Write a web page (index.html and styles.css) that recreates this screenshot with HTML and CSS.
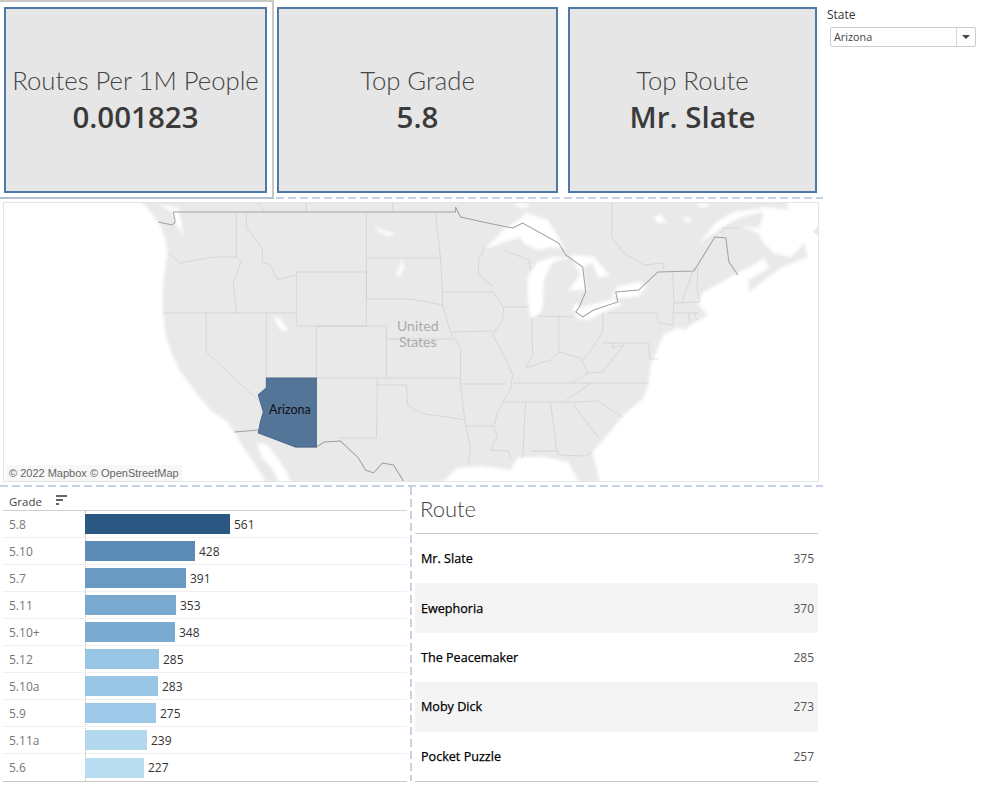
FILE: index.html
```html
<!DOCTYPE html>
<html lang="en">
<head>
    <meta charset="UTF-8">
    <title>Climbing Routes Dashboard</title>
    <link rel="stylesheet" href="styles.css">
</head>
<body>
    <div class="dashboard">
        <div class="main">
            <div class="kpi-row">
                <div class="kpi-slot kpi-slot-selected">
                    <div class="kpi-card kpi-first">
                        <div class="kpi-title">Routes Per 1M People</div>
                        <div class="kpi-value">0.001823</div>
                    </div>
                </div>
                <div class="kpi-card kpi-second">
                    <div class="kpi-title">Top Grade</div>
                    <div class="kpi-value">5.8</div>
                </div>
                <div class="kpi-card kpi-third">
                    <div class="kpi-title">Top Route</div>
                    <div class="kpi-value">Mr. Slate</div>
                </div>
            </div>
            <div class="dash-line"></div>

            <div class="map-frame">
                <svg class="map" viewBox="4 203 813 278" preserveAspectRatio="none">
                    <defs>
                        <filter id="soften" x="-5%" y="-5%" width="110%" height="110%">
                            <feGaussianBlur stdDeviation="1.1"/>
                        </filter>
                    </defs>
                    <rect class="land" x="4" y="203" width="813" height="278"/>
                    <!-- ocean and lakes are drawn white over the land -->
                    <g class="waters" filter="url(#soften)">
                        <polygon points="0,199 138,199 150,212 160,225 165,240 167,255 163,280 162,302 165,335 172,355 180,372 190,385 197,395 210,410 227,422 236,435 243,448 255,465 267,485 0,485"/>
                        <polygon points="257,443 267,445 277,458 285,470 292,485 280,485 272,468 262,458"/>
                        <polygon points="440,485 457,468 480,466 510,470 517,458 543,457 567,462 580,485"/>
                        <polygon points="787,199 821,199 821,485 600,485 592,452 607,435 623,415 643,398 648,383 650,365 663,335 677,328 683,330 707,315 697,303 702,293 737,273 753,265 763,258 768,268 747,280 748,292 760,283 780,268 807,257 803,243 790,257 773,253 763,243 757,233 743,227 758,228 763,215 760,212 738,218 720,228 700,242 715,223 733,212 757,209 763,207 787,210"/>
                        <!-- great lakes -->
                        <polygon points="487,247 503,230 522,217 525,213 547,220 560,242 563,248 550,247 537,250 523,243 520,237 503,242 490,247"/>
                        <polygon points="527,277 537,262 553,257 567,258 552,262 543,280 542,307 538,315 530,317 527,297"/>
                        <polygon points="570,255 593,257 608,275 598,278 592,263 582,267 585,290 568,290 580,275 572,260"/>
                        <polygon points="572,309 578,319 587,320 604,311 620,305 613,299 595,304 580,308 576,303"/>
                        <polygon points="611,296 617,287 638,282 646,286 638,296 620,298"/>
                        <polygon points="515,203 527,204 527,207 518,207"/>
                        <!-- smaller lakes and inlets -->
                        <polygon points="160,205 178,208 183,233 176,225 172,212"/>
                        <polygon points="375,227 383,231 393,233 388,236 379,232"/>
                        <polygon points="401,258 403,268 399,276 396,274 400,267"/>
                        <polygon points="275,317 280,319 287,330 282,331 277,325"/>
                        <polygon points="653,217 660,215 665,222 657,223"/>
                        <polygon points="683,217 689,218 688,222 684,221"/>
                        <polygon points="697,204 707,204 706,207 699,207"/>
                    </g>
                    <polygon class="land" points="817,226 812,232 817,236"/>

                    <!-- Canada / Mexico borders -->
                    <polyline class="border" points="173,212 455,212 455,207 460,217 487,223 512,228 522,223 558,243 565,255 582,267 585,292 578,308 575,312 582,317 593,310 617,302 615,292 638,290 657,272 693,271 703,255 714,237 725,238 728,262 737,275"/>
                    <polyline class="border" points="173,212 175,222 172,225 158,222"/>
                    <polyline class="border" points="234,432 258,430"/>
                    <polyline class="border" points="295,447 316,447 324,442 340,441 358,458 365,470 373,473 382,463 393,465 403,481"/>

                    <!-- western states -->
                    <polyline class="state" points="168,253 180,263 213,257 237,257"/>
                    <polyline class="state" points="236,212 236,257 241,262 233,282 236,313"/>
                    <polyline class="state" points="163,313 296,313"/>
                    <polyline class="state" points="246,212 246,228 262,248 262,262 270,265 277,280 295,275"/>
                    <polyline class="state" points="296,272 366,272 366,326 296,326 296,272"/>
                    <polyline class="state" points="366,212 366,299"/>
                    <polyline class="state" points="366,258 440,258"/>
                    <polyline class="state" points="366,299 410,299 427,302 442,305"/>
                    <polyline class="state" points="206,313 206,352 260,402"/>
                    <polyline class="state" points="266,313 266,378"/>
                    <polyline class="state" points="316,326 316,378"/>
                    <polyline class="state" points="316,326 386,326 386,378"/>
                    <polyline class="state" points="386,339 453,339"/>
                    <polyline class="state" points="316,378 460,378"/>
                    <polyline class="state" points="377,378 376,438 340,438"/>
                    <polyline class="state" points="376,385 406,385 407,405 420,413 430,415 447,417 465,420"/>
                    <polyline class="state" points="258,203 265,212"/>
                    <polyline class="state" points="306,203 306,212"/>
                    <polyline class="state" points="392,203 392,212"/>

                    <!-- plains and midwest -->
                    <polyline class="state" points="435,213 440,258 442,292 442,305 450,332 460,348 460,384 465,426 470,448 468,465"/>
                    <polyline class="state" points="442,292 493,292"/>
                    <polyline class="state" points="450,332 492,331"/>
                    <polyline class="state" points="460,384 505,384"/>
                    <polyline class="state" points="465,426 493,426"/>
                    <polyline class="state" points="493,292 503,308 502,320 492,335 503,355 512,375 510,388 497,412 493,428 497,435 490,450 508,451 510,458"/>
                    <polyline class="state" points="484,247 478,260 478,275 493,287"/>
                    <polyline class="state" points="503,250 528,260 530,270"/>
                    <polyline class="state" points="502,307 528,307"/>
                    <polyline class="state" points="531,317 532,355 525,368"/>
                    <polyline class="state" points="537,316 573,317"/>
                    <polyline class="state" points="558,317 558,352"/>
                    <polyline class="state" points="602,313 602,332 592,348 582,360"/>
                    <polyline class="state" points="525,368 550,360 558,352 580,358 587,373 573,382"/>
                    <polyline class="state" points="587,373 602,372 623,345 612,348 612,343"/>
                    <polyline class="state" points="608,313 655,313 658,323 672,325"/>
                    <polyline class="state" points="602,343 648,343 649,359 657,359"/>
                    <polyline class="state" points="672,272 673,303 672,325"/>
                    <polyline class="state" points="693,268 681,303"/>
                    <polyline class="state" points="697,268 696,288 699,302"/>
                    <polyline class="state" points="673,303 699,302"/>
                    <polyline class="state" points="672,313 698,313"/>
                    <polyline class="state" points="688,313 688,322"/>
                    <polyline class="state" points="693,313 696,320"/>
                    <polyline class="state" points="513,383 648,383"/>
                    <polyline class="state" points="505,402 573,402"/>
                    <polyline class="state" points="563,402 590,383"/>
                    <polyline class="state" points="573,402 597,401 622,417"/>
                    <polyline class="state" points="573,405 598,438"/>
                    <polyline class="state" points="525,402 522,458"/>
                    <polyline class="state" points="550,402 556,452"/>
                    <polyline class="state" points="530,451 557,451 558,455 585,456 592,452"/>
                    <polyline class="state" points="611,203 611,237 623,253 643,265 662,263 662,270"/>
                    <polyline class="state" points="720,233 723,228 738,228"/>

                    <!-- selected state -->
                    <polygon class="selected-state" points="266,378 316,378 316,447 295,447 258,433 260,422 263,412 258,395 266,388"/>
                </svg>
                <div class="map-label map-label-us">United<br>States</div>
                <div class="map-label map-label-az">Arizona</div>
                <div class="map-credit">© 2022 Mapbox © OpenStreetMap</div>
            </div>
            <div class="dash-line dash-line-lower"></div>

            <div class="bottom-row">
                <div class="grade-chart">
                    <div class="grade-header">
                        <span>Grade</span>
                        <svg class="sort-icon" width="11" height="10" viewBox="0 0 11 10">
                            <rect x="0" y="0" width="11" height="2"/>
                            <rect x="0" y="4" width="7" height="2"/>
                            <rect x="0" y="8" width="3" height="2"/>
                        </svg>
                    </div>
                    <div class="grade-rows">
                        <div class="grade-row"><span class="grade-name">5.8</span><div class="bar" style="width:145px;background:#2b5783"></div><span class="bar-value">561</span></div>
                        <div class="grade-row"><span class="grade-name">5.10</span><div class="bar" style="width:110px;background:#5b8ab5"></div><span class="bar-value">428</span></div>
                        <div class="grade-row"><span class="grade-name">5.7</span><div class="bar" style="width:101px;background:#6a9ac2"></div><span class="bar-value">391</span></div>
                        <div class="grade-row"><span class="grade-name">5.11</span><div class="bar" style="width:91px;background:#7aa9d0"></div><span class="bar-value">353</span></div>
                        <div class="grade-row"><span class="grade-name">5.10+</span><div class="bar" style="width:90px;background:#7aa9d0"></div><span class="bar-value">348</span></div>
                        <div class="grade-row"><span class="grade-name">5.12</span><div class="bar" style="width:74px;background:#9ac6e6"></div><span class="bar-value">285</span></div>
                        <div class="grade-row"><span class="grade-name">5.10a</span><div class="bar" style="width:73px;background:#9ac6e6"></div><span class="bar-value">283</span></div>
                        <div class="grade-row"><span class="grade-name">5.9</span><div class="bar" style="width:71px;background:#9ec8e8"></div><span class="bar-value">275</span></div>
                        <div class="grade-row"><span class="grade-name">5.11a</span><div class="bar" style="width:62px;background:#b3d8ee"></div><span class="bar-value">239</span></div>
                        <div class="grade-row"><span class="grade-name">5.6</span><div class="bar" style="width:59px;background:#badcf0"></div><span class="bar-value">227</span></div>
                    </div>
                </div>
                <div class="dash-line-v"></div>
                <div class="route-list">
                    <div class="route-title">Route</div>
                    <div class="route-rows">
                        <div class="route-row"><span class="route-name">Mr. Slate</span><span class="route-count">375</span></div>
                        <div class="route-row route-row-alt"><span class="route-name">Ewephoria</span><span class="route-count">370</span></div>
                        <div class="route-row"><span class="route-name">The Peacemaker</span><span class="route-count">285</span></div>
                        <div class="route-row route-row-alt"><span class="route-name">Moby Dick</span><span class="route-count">273</span></div>
                        <div class="route-row"><span class="route-name">Pocket Puzzle</span><span class="route-count">257</span></div>
                    </div>
                </div>
            </div>
        </div>

        <div class="filter">
            <div class="filter-label">State</div>
            <div class="filter-select">
                <span class="filter-text">Arizona</span>
                <span class="filter-button"><span class="filter-arrow"></span></span>
            </div>
        </div>
    </div>
</body>
</html>
```

FILE: styles.css
```css
body {
    margin: 0;
    background-color: #fff;
    font-family: "Open Sans", sans-serif;
    color: #333;
}

.dashboard {
    display: flex;
    width: 990px;
    height: 793px;
    overflow: hidden;
}

.main {
    width: 823px;
    flex-shrink: 0;
}

/* KPI cards */
.kpi-row {
    display: flex;
    height: 197px;
    align-items: flex-start;
}

.kpi-slot-selected {
    box-sizing: border-box;
    width: 274px;
    height: 199px;
    padding: 5px 0 0 4px;
    border-top: 2px solid #c8c8c8;
    border-right: 2px solid #c8c8c8;
    border-bottom: 2px solid #b4bfd0;
}

.kpi-card {
    box-sizing: border-box;
    height: 186px;
    margin-top: 7px;
    border: 2px solid #4f79a7;
    background-color: #e6e6e6;
    display: flex;
    flex-direction: column;
    align-items: center;
    justify-content: center;
    text-align: center;
}

.kpi-first {
    width: 263px;
    margin-top: 0;
}

.kpi-second {
    width: 281px;
    margin-left: 3px;
}

.kpi-third {
    width: 249px;
    margin-left: 10px;
}

.kpi-title {
    font-family: Lato, sans-serif;
    font-weight: 300;
    font-size: 25.7px;
    line-height: 34px;
    color: #444;
}

.kpi-value {
    font-family: "Open Sans", sans-serif;
    font-weight: 600;
    font-size: 29.5px;
    line-height: 40px;
    color: #3a3a3a;
}

/* dashed splitters */
.dash-line,
.dash-line-v {
    background-image: repeating-linear-gradient(90deg, #c5d2e6 0, #c5d2e6 8px, transparent 8px, transparent 12px);
}

.dash-line {
    height: 2px;
}

.dash-line-v {
    width: 2px;
    height: 294px;
    flex-shrink: 0;
    background-image: repeating-linear-gradient(180deg, #c5d2e6 0, #c5d2e6 8px, transparent 8px, transparent 12px);
}

.dash-line-lower {
    margin-top: 3px;
}

/* map */
.map-frame {
    position: relative;
    box-sizing: border-box;
    width: 816px;
    height: 280px;
    margin: 3px 0 0 3px;
    border: 1px solid #e4e4e4;
}

.map {
    display: block;
    width: 100%;
    height: 100%;
}

.land {
    fill: #e9e9e9;
}

.waters {
    fill: #fff;
    stroke: #f6f6f6;
    stroke-width: 2;
}

.border {
    fill: none;
    stroke: #a0a0a0;
    stroke-width: 1;
}

.state {
    fill: none;
    stroke: #cfcfcf;
    stroke-width: 0.7;
}

.selected-state {
    fill: #537598;
    stroke: #4a6a8c;
    stroke-width: 1;
}

.map-label {
    position: absolute;
    font-family: Lato, sans-serif;
}

.map-label-us {
    left: 393px;
    top: 115px;
    font-size: 14px;
    line-height: 16px;
    text-align: center;
    color: #a9a9a9;
}

.map-label-az {
    left: 265px;
    top: 199px;
    font-size: 12.5px;
    line-height: 16px;
    color: #111;
}

.map-credit {
    position: absolute;
    left: 2px;
    bottom: 0;
    padding: 1px 3px;
    font-family: "Liberation Sans", Arial, sans-serif;
    font-size: 11px;
    line-height: 14px;
    color: #666;
    background-color: #f7f7f7;
}

/* bottom row */
.bottom-row {
    display: flex;
    height: 294px;
}

.grade-chart {
    width: 404px;
    margin-left: 3px;
    margin-right: 3px;
    flex-shrink: 0;
}

.grade-header {
    box-sizing: border-box;
    height: 24px;
    padding: 6px 0 0 6px;
    display: flex;
    align-items: center;
    gap: 14px;
    font-size: 11.5px;
    color: #444;
    border-bottom: 1px solid #cfcfd4;
}

.sort-icon {
    fill: #666;
    margin-top: -4px;
}

.grade-rows {
    position: relative;
    border-bottom: 1px solid #c8c8c8;
}

.grade-rows::before {
    content: "";
    position: absolute;
    left: 82px;
    top: 0;
    bottom: 0;
    border-left: 1px dotted #bbb;
}

.grade-row {
    position: relative;
    box-sizing: border-box;
    height: 27px;
    display: flex;
    align-items: center;
    border-bottom: 1px solid #f0f0f0;
}

.grade-row:last-child {
    border-bottom: none;
}

.grade-name {
    width: 82px;
    padding-left: 6px;
    box-sizing: border-box;
    font-size: 12px;
    color: #777;
}

.bar {
    height: 20px;
}

.bar-value {
    margin-left: 4px;
    font-size: 12px;
    color: #333;
}

/* route list */
.route-list {
    width: 403px;
    margin-left: 3px;
    flex-shrink: 0;
}

.route-title {
    box-sizing: border-box;
    height: 47px;
    padding: 8px 0 0 5px;
    font-family: Lato, sans-serif;
    font-weight: 300;
    font-size: 22px;
    line-height: 27px;
    color: #444;
    border-bottom: 1px solid #c8c8c8;
}

.route-rows {
    border-bottom: 1px solid #c8c8c8;
}

.route-row {
    box-sizing: border-box;
    height: 49.4px;
    padding: 0 4px 0 6px;
    display: flex;
    align-items: center;
    justify-content: space-between;
}

.route-row-alt {
    background-color: #f4f4f4;
}

.route-name {
    font-size: 12.6px;
    color: #000;
    -webkit-text-stroke: 0.25px #000;
}

.route-count {
    font-size: 12px;
    color: #555;
}

/* filter */
.filter {
    padding: 8px 0 0 4px;
    width: 160px;
}

.filter-label {
    font-size: 12px;
    line-height: 13px;
    color: #333;
}

.filter-select {
    box-sizing: border-box;
    width: 146px;
    height: 20px;
    margin: 6px 0 0 3px;
    display: flex;
    align-items: stretch;
    border: 1px solid #ccc;
    border-radius: 2px;
    font-size: 10.8px;
    line-height: 18px;
}

.filter-text {
    flex: 1;
    padding-left: 3px;
    color: #444;
}

.filter-button {
    width: 18px;
    border-left: 1px solid #d8d8d8;
    display: flex;
    align-items: center;
    justify-content: center;
}

.filter-arrow {
    width: 0;
    height: 0;
    border-left: 4px solid transparent;
    border-right: 4px solid transparent;
    border-top: 4px solid #444;
}
```
